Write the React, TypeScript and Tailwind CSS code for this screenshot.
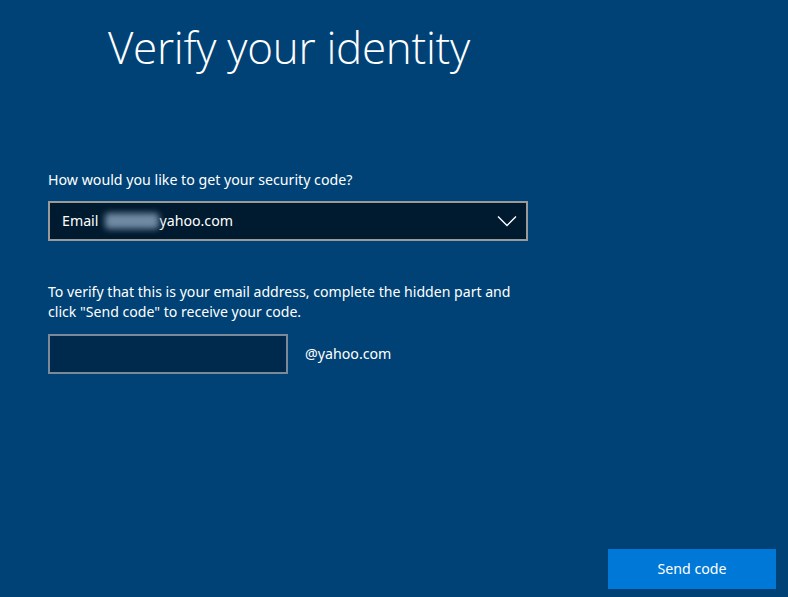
export default function App() {
  return (
    <div
      className="relative h-[597px] w-[788px] overflow-hidden bg-[#004275] text-white"
      style={{ fontFamily: '"Noto Sans", "Open Sans", sans-serif' }}
    >
      <h1
        className="pl-[108px] pt-[15px] text-[44px] leading-[64px] font-light tracking-[-0.3px]"
        style={{ fontFamily: '"Open Sans", "Noto Sans", sans-serif' }}
      >
        Verify your identity
      </h1>

      <div className="px-12 pt-[91px]">
        <p className="text-[14.2px] leading-5">How would you like to get your security code?</p>

        {/* Method dropdown */}
        <div className="mt-[11px] flex h-[40px] w-[480px] items-center justify-between border-2 border-[#9a9a9a] bg-[#001a30] pl-3 pr-[9px]">
          <span className="flex items-center text-[14.2px]">
            Email
            <span className="ml-[7px] inline-block h-[16px] w-[54px] rounded-sm bg-[#6f8aa3] blur-[3px]" />
            yahoo.com
          </span>
          <svg width="20" height="12" viewBox="0 0 20 12" fill="none" aria-hidden="true">
            <path d="M1 1.5 L10 10.5 L19 1.5" stroke="white" strokeWidth="1.4" />
          </svg>
        </div>

        <p className="mt-[41px] w-[480px] text-[14.1px] leading-5">
          To verify that this is your email address, complete the hidden part and click "Send code" to receive your code.
        </p>

        <div className="mt-[12px] flex items-center gap-[17px]">
          <input
            className="h-[40px] w-[240px] border-2 border-[#7a8a99] bg-[#002a4d] px-2 text-white outline-none"
            aria-label="hidden part"
          />
          <span className="text-[14.2px]">@yahoo.com</span>
        </div>
      </div>

      <button className="absolute bottom-[8px] right-[12px] h-[40px] w-[168px] bg-[#0078d7] text-[14.2px] text-white">
        Send code
      </button>
    </div>
  )
}
